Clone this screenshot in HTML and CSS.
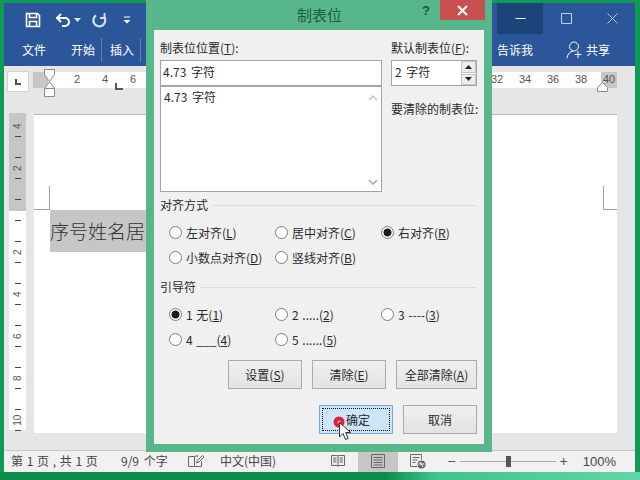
FILE: index.html
```html
<!DOCTYPE html>
<html lang="zh">
<head>
<meta charset="utf-8">
<title>制表位</title>
<link rel="stylesheet" href="styles.css">
</head>
<body>
<div class="desktop">
  <div class="window">
    <header class="ribbon">
      <div class="qat">
        <svg class="ic-save" width="16" height="16" viewBox="0 0 16 16"><path d="M1.5 1.5h11l2 2v11h-13z M4.500 1.500v4h7v-4 M4.500 14.500v-5h7v5" fill="none" stroke="#fff" stroke-width="1.600"/></svg>
        <svg class="ic-undo" width="16" height="16" viewBox="0 0 16 16"><path d="M6 2L2 6l4 4" fill="none" stroke="#fff" stroke-width="2"/><path d="M2.500 6H10a3.700 3.700 0 0 1 0 8H7" fill="none" stroke="#fff" stroke-width="2"/></svg>
        <svg class="ic-caret" width="7" height="4" viewBox="0 0 7 4"><path d="M0 0h7L3.500 4z" fill="#dfe7f3"/></svg>
        <svg class="ic-redo" width="16" height="16" viewBox="0 0 16 16"><path d="M5 3.300A6 6 0 1 0 13 4.500" fill="none" stroke="#d5e0f0" stroke-width="2.200"/><path d="M13.500 1v5h-4.500" fill="none" stroke="#d5e0f0" stroke-width="1.800"/></svg>
        <svg class="ic-more" width="8" height="8" viewBox="0 0 8 8"><path d="M1 1h6" stroke="#fff" fill="none"/><path d="M0.500 4h7L4 7.500z" fill="#fff"/></svg>
        <div class="winctl">
          <span class="ctl ctl-min"><svg width="11" height="11" viewBox="0 0 11 11"><path d="M0.500 5.500h10" stroke="#fff" fill="none"/></svg></span>
          <span class="ctl"><svg width="11" height="11" viewBox="0 0 11 11"><path d="M0.500 0.500h10v10h-10z" stroke="#c3d2e8" fill="none"/></svg></span>
          <span class="ctl"><svg width="11" height="11" viewBox="0 0 11 11"><path d="M0.500 0.500l10 10M10.500 0.500l-10 10" stroke="#b5c6e0" fill="none"/></svg></span>
        </div>
      </div>
      <nav class="tabs">
        <span class="tab tab-file">文件</span>
        <span class="tab tab-sep">开始</span>
        <span class="tab tab-sep">插入</span>
        <span class="tab tab-tell">告诉我</span>
        <span class="tab tab-share"><svg width="18" height="18" viewBox="0 0 18 18"><circle cx="8" cy="5.500" r="4.500" fill="none" stroke="#fff"/><path d="M1 17c0.500-4 3-6.500 6-6.800M12 10v7M8.500 13.500h7" fill="none" stroke="#fff"/></svg>共享</span>
      </nav>
    </header>

    <div class="ruler-row">
      <div class="tabsel"><span class="tabsel-l"></span></div>
      <div class="hruler">
        <span class="hr-margin-l"></span>
        <div class="hr-nums hr-nums-l"><span>2</span><span>4</span><span>6</span></div>
        <div class="hr-nums hr-nums-r"><span>32</span><span>34</span><span>36</span><span>38</span><span class="hr-last">40</span></div>
        <svg class="marker-indent" width="12" height="28" viewBox="0 0 12 28"><path d="M0.500 0.500h10v5l-5 7 5 7v8h-10v-8l5-7-5-7z M0.500 19.500h10" fill="#fff" stroke="#8a8a8a"/></svg>
        <span class="marker-tab"></span>
        <svg class="marker-right" width="12" height="10" viewBox="0 0 12 10"><path d="M0.500 9.500v-4l5-5 5 5v4z" fill="#fff" stroke="#8a8a8a"/></svg>
      </div>
    </div>

    <div class="workspace">
      <div class="vruler">
        <span class="vc num">4</span><span class="vc tick"></span><span class="vc"></span><span class="vc tick"></span>
        <span class="vc num">2</span><span class="vc tick"></span><span class="vc"></span><span class="vc tick"></span>
        <span class="vc"></span><span class="vc tick"></span><span class="vc"></span><span class="vc tick"></span>
        <span class="vc num">2</span><span class="vc tick"></span><span class="vc"></span><span class="vc tick"></span>
        <span class="vc num">4</span><span class="vc tick"></span><span class="vc"></span><span class="vc tick"></span>
        <span class="vc num">6</span><span class="vc tick"></span><span class="vc"></span><span class="vc tick"></span>
        <span class="vc num">8</span><span class="vc tick"></span><span class="vc"></span><span class="vc tick"></span>
        <span class="vc num">10</span><span class="vc tick"></span>
      </div>
      <div class="page">
        <span class="crop crop-l"></span>
        <span class="crop crop-r"></span>
        <p class="docline">序号姓名居</p>
      </div>
    </div>

    <footer class="status">
      <span class="st-page">第 1 页 , 共 1 页</span>
      <span class="st-words">9/9 个字</span>
      <svg class="st-book" width="17" height="14" viewBox="0 0 17 14"><path d="M7.500 2.500h-6v10h6zM7.500 2.500l3-1v1.500M7.500 12.500h7v-5M15.500 1.500l-5 5-1 2.500 2.500-1 5-5z" fill="none" stroke="#666"/></svg>
      <span class="st-lang">中文(中国)</span>
      <div class="st-right">
        <span class="view"><svg width="14" height="14" viewBox="0 0 14 14"><path d="M0.500 1.500h6l0.500 1 0.500-1h6v10h-6l-0.500 1-0.500-1h-6zM7 2.500v9M2 4h3.500M2 6h3.500M2 8h3.500M8.500 4h3.500M8.500 6h3.500M8.500 8h3.500" fill="none" stroke="#666"/></svg></span>
        <span class="view view-on"><svg width="14" height="14" viewBox="0 0 14 14"><path d="M0.500 0.500h13v13h-13zM2.500 3.500h9M2.500 6h9M2.500 8.500h9M2.500 11h9" fill="none" stroke="#666"/></svg></span>
        <span class="view"><svg width="16" height="15" viewBox="0 0 16 15"><path d="M7 12.500H0.500v-12h11v5M2.500 3.500h7M2.500 6h5M2.500 8.500h3" fill="none" stroke="#666"/><circle cx="11.500" cy="10.500" r="4" fill="#666"/><path d="M8.500 10h6M10 8l3 5" stroke="#fff" fill="none"/></svg></span>
        <div class="zoombar">
          <span class="z-sign">−</span>
          <span class="z-track"><span class="z-handle"></span></span>
          <span class="z-sign">+</span>
        </div>
        <span class="st-zoom">100%</span>
      </div>
    </footer>
  </div>
  <div class="strip"></div>

  <section class="dialog">
    <div class="dlg-title">
      <span></span>
      <span class="dlg-name">制表位</span>
      <div class="dlg-tools">
        <span class="dlg-help">?</span>
        <span class="dlg-close"><svg width="11" height="11" viewBox="0 0 11 11"><path d="M1 1l9 9M10 1l-9 9" stroke="#fff" stroke-width="2" fill="none"/></svg></span>
      </div>
    </div>
    <div class="dlg-body">
      <div class="top">
        <div class="col-left">
          <div class="lbl">制表位位置(<u>T</u>):</div>
          <div class="field">4.73 字符</div>
          <div class="list">
            <span class="list-item">4.73 字符</span>
            <div class="scroll">
              <svg width="10" height="6" viewBox="0 0 10 6"><path d="M1 5l4-4 4 4" fill="none" stroke="#c4c4c4" stroke-width="1.500"/></svg>
              <svg width="10" height="6" viewBox="0 0 10 6"><path d="M1 1l4 4 4-4" fill="none" stroke="#a8a8a8" stroke-width="1.500"/></svg>
            </div>
          </div>
        </div>
        <div class="col-right">
          <div class="lbl">默认制表位(<u>F</u>):</div>
          <div class="spin">
            <span>2 字符</span>
            <div class="spin-btns">
              <span class="spin-btn"><svg width="7" height="4" viewBox="0 0 7 4"><path d="M3.500 0L7 4H0z" fill="#222"/></svg></span>
              <span class="spin-btn"><svg width="7" height="4" viewBox="0 0 7 4"><path d="M0 0h7L3.500 4z" fill="#222"/></svg></span>
            </div>
          </div>
          <div class="lbl lbl-clear">要清除的制表位:</div>
        </div>
      </div>

      <div class="sec sec-align">对齐方式</div>
      <div class="radios">
        <label class="rd"><i class="dot"></i>左对齐(<u>L</u>)</label>
        <label class="rd"><i class="dot"></i>居中对齐(<u>C</u>)</label>
        <label class="rd"><i class="dot on"></i>右对齐(<u>R</u>)</label>
        <label class="rd"><i class="dot"></i>小数点对齐(<u>D</u>)</label>
        <label class="rd"><i class="dot"></i>竖线对齐(<u>B</u>)</label>
      </div>

      <div class="sec sec-leader">引导符</div>
      <div class="radios">
        <label class="rd"><i class="dot on"></i>1 无(<u>1</u>)</label>
        <label class="rd"><i class="dot"></i>2 .....(<u>2</u>)</label>
        <label class="rd"><i class="dot"></i>3 ----(<u>3</u>)</label>
        <label class="rd"><i class="dot"></i>4 ___(<u>4</u>)</label>
        <label class="rd"><i class="dot"></i>5 ......(<u>5</u>)</label>
      </div>

      <div class="btns btns-a">
        <span class="btn">设置(<u>S</u>)</span>
        <span class="btn">清除(<u>E</u>)</span>
        <span class="btn btn-wide">全部清除(<u>A</u>)</span>
      </div>
      <div class="btns btns-b">
        <span class="btn btn-ok"><span class="btn-focus">确定</span></span>
        <span class="btn">取消</span>
      </div>
    </div>
  </section>

  <svg class="pointer" width="22" height="28" viewBox="0 0 22 28"><circle cx="6" cy="6" r="5.500" fill="#e2203c"/><circle cx="6" cy="6" r="1.800" fill="#f58a94"/><path d="M6.500 6.500v14.500l3.500-3.500 2.500 6 2.700-1.200-2.500-5.800h5z" fill="#fff" stroke="#333" stroke-width="1"/></svg>
</div>
</body>
</html>
```
FILE: styles.css
```css
* { box-sizing: border-box; }
html, body { margin: 0; padding: 0; }
body {
  width: 640px;
  height: 480px;
  overflow: hidden;
  font-family: "Noto Sans CJK SC", "Liberation Sans", sans-serif;
  font-size: 12px;
  color: #2a2a2a;
  word-spacing: 2px;
}
.desktop {
  position: relative;
  width: 640px;
  height: 480px;
  padding-top: 3px;
  background: #0f9a56;
  overflow: hidden;
}
.window {
  width: 631px;
  height: 469px;
  margin-left: 4px;
  display: flex;
  flex-direction: column;
  background: #e6e6e6;
}
.strip {
  height: 8px;
  background: linear-gradient(100deg, #0b8c4b 0, #0b8c4b 60%, #3fc48a 68%, #62d6a6 100%);
}

/* ribbon */
.ribbon { height: 63px; background: #2b579a; color: #fff; flex: none; }
.qat { height: 31px; display: flex; align-items: center; padding-top: 2px; }
.ic-save { margin-left: 21px; }
.ic-undo { margin-left: 14px; }
.ic-caret { margin-left: 3px; }
.ic-redo { margin-left: 10px; }
.ic-more { margin-left: 16px; }
.winctl { margin-left: auto; display: flex; height: 31px; margin-top: -2px; }
.ctl { width: 46px; display: flex; align-items: center; justify-content: center; }
.ctl-min { background: #1d4478; }
.tabs { height: 32px; display: flex; align-items: center; font-size: 12px; padding: 0 25px 0 0; }
.tab { line-height: 18px; }
.tab-file { margin-left: 18px; margin-right: 25px; }
.tab-sep { padding-right: 6px; margin-right: 8px; border-right: 1px solid #5d80b6; height: 24px; line-height: 24px; }
.tab-tell { margin-left: auto; }
.tab-share { margin-left: 33px; display: flex; align-items: center; gap: 2px; }

/* horizontal ruler */
.ruler-row { height: 48px; flex: none; display: flex; padding: 6px 0 0 4px; }
.tabsel {
  width: 20px;
  height: 19px;
  background: #fff;
  box-shadow: 0 0 0 1px #d4d4d4;
  display: flex;
  align-items: center;
  justify-content: center;
}
.tabsel-l { width: 6px; height: 6px; border-left: 2px solid #555; border-bottom: 2px solid #555; }
.hruler {
  position: relative;
  width: 584px;
  height: 16px;
  margin-left: 5px;
  background: #fff;
  display: flex;
  font-family: "Liberation Sans", sans-serif;
  font-size: 11px;
  color: #555;
}
.hr-margin-l { width: 15px; background: #c6c6c6; flex: none; }
.hr-nums { display: flex; }
.hr-nums span { width: 28px; text-align: center; line-height: 15px; flex: none; }
.hr-nums-l { margin-left: 15px; }
.hr-nums-r { margin-left: auto; }
.hr-nums .hr-last { width: 16px; margin-left: 6px; background: #c6c6c6; }
.marker-indent { position: absolute; left: 11px; top: -3px; }
.marker-tab { position: absolute; left: 82px; top: 11px; width: 8px; height: 7px; border-left: 2px solid #555; border-bottom: 2px solid #555; }
.marker-right { position: absolute; left: 564px; top: 10px; }

/* workspace */
.workspace { flex: 1; display: flex; padding-left: 5px; min-height: 0; }
.vruler {
  width: 17px;
  height: 317px;
  margin-top: -1px;
  padding-top: 8px;
  background: linear-gradient(#c6c6c6 0, #c6c6c6 98px, #fff 98px);
  display: flex;
  flex-direction: column;
  font-family: "Liberation Sans", sans-serif;
  font-size: 10px;
  color: #555;
  flex: none;
}
.vc { height: 10.5px; flex: none; display: flex; align-items: center; justify-content: center; }
.vc.tick::before { content: ""; width: 6px; height: 1px; background: #444; }
.vc.num { transform: rotate(-90deg); }
.page {
  position: relative;
  width: 583px;
  height: 319px;
  margin-left: 8px;
  background: #fff;
  border-top: 1px solid #b8b8b8;
  padding: 95px 0 0 16px;
  overflow: hidden;
}
.crop { position: absolute; top: 71px; width: 16px; height: 24px; border-bottom: 1px solid #a0a0a0; }
.crop-l { left: 0; border-right: 1px solid #a0a0a0; }
.crop-r { right: 0; width: 14px; border-left: 1px solid #a0a0a0; }
.docline {
  margin: 0;
  width: 100px;
  height: 42px;
  line-height: 42px;
  background: #c6c6c6;
  color: #333;
  font-size: 19px;
  font-weight: 300;
  white-space: nowrap;
}

/* status bar */
.status {
  height: 22px;
  flex: none;
  display: flex;
  align-items: center;
  background: #f1f1f1;
  border-top: 1px solid #c8c8c8;
  color: #444;
  padding: 0 0 2px 7px;
}
.st-page { width: 110px; white-space: nowrap; word-spacing: 1px; }
.st-words { width: 66px; white-space: nowrap; word-spacing: 2px; }
.st-book { margin-right: 16px; }
.st-lang { width: 60px; white-space: nowrap; }
.st-right { margin-left: auto; display: flex; align-items: center; height: 22px; margin-top: 1px; }
.view { width: 40px; height: 22px; display: flex; align-items: center; justify-content: center; }
.view-on { background: #c6c6c6; }
.zoombar { display: flex; align-items: center; margin-left: 6px; font-size: 14px; color: #555; }
.z-sign { width: 16px; text-align: center; line-height: 18px; }
.z-track { position: relative; width: 96px; height: 1px; background: #a8a8a8; }
.z-handle { position: absolute; left: 46px; top: -5px; width: 5px; height: 11px; background: #555; }
.st-zoom { margin: 0 19px 0 11px; font-size: 13px; font-family: "Liberation Sans", sans-serif; }

/* dialog */
.dialog {
  position: absolute;
  left: 146px;
  top: 0;
  width: 346px;
  height: 452px;
  background: #58b78a;
  padding: 0 8px 8px;
  display: flex;
  flex-direction: column;
}
.dlg-title { height: 30px; flex: none; display: grid; grid-template-columns: 1fr auto 1fr; align-items: start; margin: 0 -1px 0 0; }
.dlg-name { font-size: 15px; line-height: 29px; color: #1d5a42; }
.dlg-tools { display: flex; justify-content: flex-end; align-items: flex-start; }
.dlg-help { font-family: "Liberation Sans", sans-serif; font-weight: 700; font-size: 13px; line-height: 21px; color: #1f4f3a; margin-right: 10px; }
.dlg-close { width: 45px; height: 20px; background: #c75050; display: flex; align-items: center; justify-content: center; }
.dlg-body { flex: 1; background: #f0f0f0; padding: 9px 7px 0 6px; }
.top { display: flex; gap: 9px; height: 153px; }
.col-left { width: 222px; }
.col-right { width: 86px; white-space: nowrap; }
.lbl { height: 18px; line-height: 18px; margin-bottom: 3px; }
.lbl-clear { margin-top: 14px; }
.field, .list, .spin { background: #fff; border: 1px solid #a3a3a3; }
.field { height: 26px; line-height: 22px; padding-left: 2px; }
.list { height: 106px; padding-left: 3px; display: flex; justify-content: space-between; }
.list-item { line-height: 19px; }
.scroll { width: 17px; padding: 8px 0 6px; display: flex; flex-direction: column; align-items: center; justify-content: space-between; }
.spin { height: 26px; line-height: 22px; padding-left: 3px; display: flex; justify-content: space-between; }
.spin-btns { width: 15px; display: flex; flex-direction: column; gap: 1px; }
.spin-btn { flex: 1; background: #ececec; border: 1px solid #c4c4c4; display: flex; align-items: center; justify-content: center; }
.sec {
  height: 18px;
  line-height: 18px;
  display: flex;
  align-items: center;
  gap: 4px;
}
.sec::after { content: ""; flex: 1; height: 1px; background: #dcdcdc; }
.sec-align { margin-top: 4px; }
.sec-leader { margin-top: 8px; }
.radios {
  display: grid;
  grid-template-columns: repeat(3, 106px);
  grid-auto-rows: 25px;
  margin: 6px 0 0 9px;
}
.rd { display: flex; align-items: center; white-space: pre; word-spacing: 1px; }
.dot {
  width: 13px;
  height: 13px;
  margin-right: 4px;
  border: 1px solid #7c7c7c;
  border-radius: 50%;
  background: #fff;
  flex: none;
}
.dot.on { background: radial-gradient(circle, #1a1a1a 0, #1a1a1a 3.6px, #fff 4.4px); }
.btns { display: flex; justify-content: flex-end; }
.btns-a { gap: 10px; margin-top: 8px; }
.btns-b { gap: 10px; margin-top: 16px; }
.btn {
  width: 74px;
  height: 29px;
  display: flex;
  align-items: center;
  justify-content: center;
  background: linear-gradient(#efefef, #e3e3e3);
  border: 1px solid #ababab;
}
.btn-wide { width: 81px; }
.btn-ok { background: #cde5f9; border-color: #7ea6d4; padding: 2px; }
.btn-focus { flex: 1; height: 100%; display: flex; align-items: center; justify-content: center; border: 1px dotted #111; padding-left: 4px; }

/* pointer overlay */
.pointer { position: absolute; left: 333px; top: 416px; }
```
